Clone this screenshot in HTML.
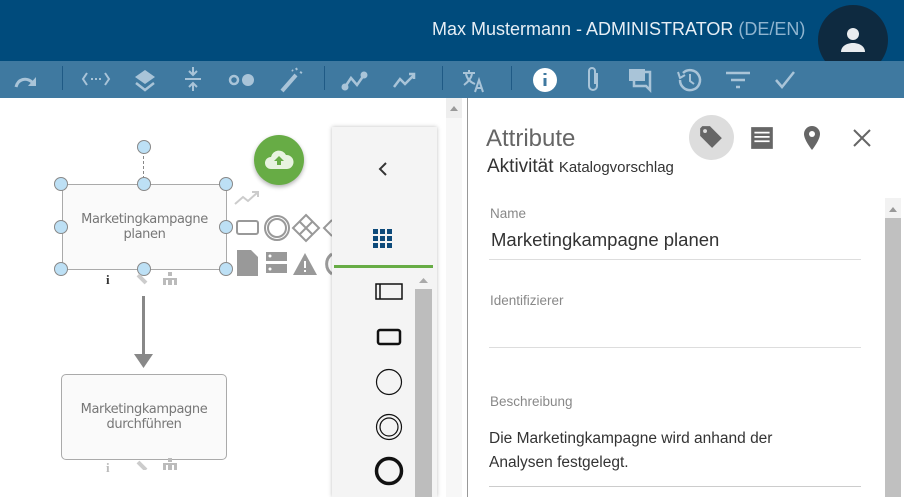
<!DOCTYPE html>
<html><head><meta charset="utf-8"><style>
*{margin:0;padding:0;box-sizing:border-box}
body{width:904px;height:497px;overflow:hidden;position:relative;background:#fff;font-family:"Liberation Sans",sans-serif}
.a{position:absolute}
.hdr{left:0;top:0;width:904px;height:61px;background:#004b7c}
.tb{left:0;top:61px;width:904px;height:37px;background:#3f79a0}
.sep{top:66px;width:1px;height:24px;background:#1f5a85}
.lbl{color:#888;font-size:13.5px}
.line{left:489px;width:372px;height:1px;background:#ddd}
.h{width:14px;height:14px;border-radius:50%;background:#bde0f5;border:1.5px solid #888}
.bx{display:flex;align-items:center;justify-content:center;text-align:center;font-size:13px;color:#777;line-height:15px;font-family:'DejaVu Sans',sans-serif;letter-spacing:-.4px}
</style></head><body>
<div class="a hdr"></div>
<div class="a" style="left:432px;top:19px;color:#e6eef5;font-size:18px">Max Mustermann - ADMINISTRATOR <span style="color:#8fb4cf">(DE/EN)</span></div>
<div class="a" style="left:818px;top:5px;width:70px;height:70px;border-radius:50%;background:#0e2a40"></div>
<svg class="a" style="left:835px;top:22px" width="36" height="36" viewBox="0 0 24 24"><circle cx="12" cy="8" r="4" fill="#e8ecef"/><path d="M4 20c0-4 4-6 8-6s8 2 8 6z" fill="#e8ecef"/></svg>
<div class="a tb"></div>
<div class="a sep" style="left:62px"></div><div class="a sep" style="left:324px"></div><div class="a sep" style="left:442px"></div><div class="a sep" style="left:511px"></div>
<svg class="a" style="left:0;top:61px" width="904" height="37" viewBox="0 0 904 37" fill="none" stroke="#a9c4d8" stroke-width="3">
<path d="M16 26c2-8 10-10 16-5" /><path d="M36 16v9h-8z" fill="#a9c4d8" stroke="none"/>
<path d="M87 12l-4 6 4 6M105 12l4 6-4 6" stroke-width="2"/><path d="M91 18h2M95 18h2M99 18h2" stroke-width="2"/>
<path d="M145 9l10 7-10 7-10-7z" fill="#a9c4d8" stroke="none"/><path d="M136 22l9 7 9-7" stroke-width="2.5"/>
<path d="M185 18h16M193 6v7M193 30v-7" stroke-width="2"/><path d="M189 10l4 4 4-4M189 26l4-4 4 4" stroke-width="2"/>
<circle cx="234" cy="19" r="4" stroke-width="2.5"/><circle cx="248" cy="19" r="6" fill="#a9c4d8" stroke="none"/>
<path d="M282 30l14-16" stroke-width="4"/><path d="M296 7l1 2M300 11l2 1M292 9l1 1" stroke-width="2"/>
<path d="M345 26l6-9 6 7 7-10" stroke-width="2.5"/><circle cx="345" cy="26" r="2" fill="#a9c4d8"/><circle cx="364" cy="14" r="2" fill="#a9c4d8"/>
<path d="M394 26l6-8 5 5 9-9M409 13h5v5" stroke-width="2.5"/>
<path d="M463 12h12M469 9v3M466 13c1 5 4 8 9 10M472 13c-1 5-4 8-8 11" stroke-width="2"/><path d="M475 31l4-12 4 12M477 27h5" stroke-width="2"/>
<circle cx="545" cy="19" r="12" fill="#fff" stroke="none"/><path d="M545 17v8M545 12v2" stroke="#3f79a0" stroke-width="3"/>
<path d="M597 12v13a4 4 0 0 1-8 0v-15a3 3 0 0 1 6 0v13" stroke-width="2"/>
<path d="M629 8h16v12h-16z" fill="#a9c4d8" stroke="none"/><path d="M645 11h5v18l-4-4h-12v-5" stroke-width="2.5"/>
<path d="M680 19a10 10 0 1 0 3-7" stroke-width="2.5"/><path d="M678 11l2 6 5-3" stroke-width="2"/><path d="M690 13v7l4 3" stroke-width="2"/>
<path d="M726 12h24M731 19h14M736 26h4" stroke-width="2.5"/>
<path d="M776 19l6 7 12-15" stroke-width="2.5"/>
</svg>
<!-- canvas -->
<div class="a bx" style="left:62px;top:184px;width:165px;height:86px;border:1.5px solid #aaa;background:#fafafa">Marketingkampagne<br>planen</div>
<div class="a" style="left:143px;top:151px;width:0;height:33px;border-left:1.5px dashed #888"></div>
<div class="a h" style="left:137px;top:140px"></div>
<div class="a h" style="left:54px;top:177px"></div><div class="a h" style="left:137px;top:177px"></div><div class="a h" style="left:219px;top:177px"></div>
<div class="a h" style="left:54px;top:220px"></div><div class="a h" style="left:219px;top:220px"></div>
<div class="a h" style="left:54px;top:262px"></div><div class="a h" style="left:137px;top:262px"></div><div class="a h" style="left:219px;top:262px"></div>
<div class="a" style="left:106px;top:272px;font-size:13px;font-weight:bold;color:#333;font-family:'Liberation Serif',serif">i</div>
<div class="a" style="left:142px;top:296px;width:3px;height:60px;background:#888"></div>
<svg class="a" style="left:134px;top:354px" width="19" height="14"><path d="M0 0h19l-9.5 14z" fill="#888"/></svg>
<div class="a bx" style="left:61px;top:374px;width:166px;height:86px;border:1.5px solid #aaa;border-radius:5px;background:#fafafa">Marketingkampagne<br>durchführen</div>
<div class="a" style="left:106px;top:460px;font-size:13px;font-weight:bold;color:#bbb;font-family:'Liberation Serif',serif">i</div>
<svg class="a" style="left:136px;top:270px" width="50" height="200" fill="#bbb"><path d="M2 5l8 8" stroke="#ccc" stroke-width="4"/><rect x="32" y="2" width="4" height="4"/><rect x="27" y="8" width="14" height="2"/><rect x="27" y="10" width="3" height="5"/><rect x="32" y="10" width="4" height="5"/><rect x="38" y="10" width="3" height="5"/>
<path d="M2 192l8 8" stroke="#ccc" stroke-width="4"/><rect x="32" y="188" width="4" height="4"/><rect x="27" y="193" width="14" height="2"/><rect x="27" y="195" width="3" height="5"/><rect x="32" y="195" width="4" height="5"/><rect x="38" y="195" width="3" height="5"/></svg>
<svg class="a" style="left:232px;top:186px" width="100" height="92" fill="none" stroke="#999" stroke-width="2">
<path d="M3 18l8-7 5 4 10-9M20 6h6v5" stroke="#ccc"/>
<rect x="5" y="35" width="21" height="13" rx="2"/><circle cx="45" cy="42" r="12"/><circle cx="45" cy="42" r="9"/>
<path d="M74 29l13 13-13 13-13-13z"/><path d="M68 36l12 12M80 36l-12 12"/><path d="M100 34l-8 8 8 8"/>
<path d="M5 64h14l7 7v19h-21z" fill="#999" stroke="none"/><rect x="34" y="66" width="21" height="9" fill="#999" stroke="none"/><rect x="34" y="78" width="21" height="9" fill="#999" stroke="none"/><circle cx="38" cy="70" r="1.5" fill="#fff" stroke="none"/><circle cx="38" cy="83" r="1.5" fill="#fff" stroke="none"/>
<path d="M61 89l12-22 12 22z" fill="#999" stroke="none"/><path d="M73 75v7M73 84v2" stroke="#fff"/><path d="M100 68a12 12 0 0 0 0 20" stroke-width="3"/></svg>
<div class="a" style="left:254px;top:135px;width:50px;height:50px;border-radius:50%;background:#67ac45;box-shadow:0 2px 4px rgba(0,0,0,.3)"></div>
<svg class="a" style="left:263px;top:147px" width="32" height="26" viewBox="0 0 32 26"><path d="M8 22a6 6 0 0 1 0-12 8 8 0 0 1 15-2 6 6 0 0 1 1 14z" fill="#e8f3e0"/><path d="M16 9l-5 5h3v4h4v-4h3z" fill="#67ac45"/></svg>
<!-- palette -->
<div class="a" style="left:332px;top:127px;width:105px;height:370px;background:#f4f4f4;box-shadow:0 0 4px rgba(0,0,0,.25)"></div>
<svg class="a" style="left:376px;top:160px" width="14" height="18"><path d="M10 3l-6 6 6 6" stroke="#333" stroke-width="2" fill="none"/></svg>
<svg class="a" style="left:373px;top:229px" width="20" height="20" fill="#0d4a7a"><rect x="0" y="0" width="5" height="5"/><rect x="7" y="0" width="5" height="5"/><rect x="14" y="0" width="5" height="5"/><rect x="0" y="7" width="5" height="5"/><rect x="7" y="7" width="5" height="5"/><rect x="14" y="7" width="5" height="5"/><rect x="0" y="14" width="5" height="5"/><rect x="7" y="14" width="5" height="5"/><rect x="14" y="14" width="5" height="5"/></svg>
<div class="a" style="left:334px;top:265px;width:99px;height:3px;background:#67ac45"></div>
<div class="a" style="left:415px;top:289px;width:17px;height:208px;background:#bdbdbd"></div>
<svg class="a" style="left:415px;top:275px" width="17" height="10"><path d="M4 8l4.5-5 4.5 5z" fill="#aaa"/></svg>
<svg class="a" style="left:370px;top:280px" width="40" height="217" fill="none" stroke="#111">
<rect x="6" y="4" width="26" height="15" stroke-width="1.5"/><path d="M10 4v15" stroke-width="1.5"/>
<rect x="8" y="50" width="22" height="14" rx="2" stroke-width="2.5"/>
<circle cx="19" cy="102" r="12.5" stroke-width="1.2"/>
<circle cx="19" cy="147" r="12.5" stroke-width="1.2"/><circle cx="19" cy="147" r="9" stroke-width="1.2"/>
<circle cx="19" cy="191" r="12.5" stroke-width="3.5"/></svg>
<!-- left scroll strip -->
<div class="a" style="left:446px;top:98px;width:16px;height:399px;background:#f7f7f7"></div>
<div class="a" style="left:446px;top:98px;width:16px;height:20px;background:#eee"></div>
<svg class="a" style="left:450px;top:104px" width="8" height="8"><path d="M0 7l4-5 4 5z" fill="#999"/></svg>
<div class="a" style="left:467px;top:98px;width:1px;height:399px;background:#999"></div>
<!-- right panel -->
<div class="a" style="left:486px;top:125px;font-size:24px;color:#666">Attribute</div>
<div class="a" style="left:487px;top:156px;font-size:19px;color:#333">Aktivität <span style="font-size:15px">Katalogvorschlag</span></div>
<div class="a" style="left:689px;top:115px;width:45px;height:45px;border-radius:50%;background:#ddd"></div>
<svg class="a" style="left:698px;top:124px" width="26" height="26" viewBox="0 0 24 24"><path d="M2 4v7l11 11 9-9-11-11h-7z" fill="#666"/><circle cx="6.5" cy="6.5" r="1.8" fill="#ddd"/></svg>
<svg class="a" style="left:749px;top:125px" width="26" height="26" viewBox="0 0 24 24"><path d="M2 2h20v20h-20z" fill="#666"/><path d="M5 7h14M5 11h14M5 15h14" stroke="#fff" stroke-width="1.6"/></svg>
<svg class="a" style="left:800px;top:124px" width="24" height="28" viewBox="0 0 24 28"><path d="M12 2a8 8 0 0 0-8 8c0 6 8 16 8 16s8-10 8-16a8 8 0 0 0-8-8z" fill="#666"/><circle cx="12" cy="10" r="3" fill="#fff"/></svg>
<svg class="a" style="left:852px;top:128px" width="20" height="20"><path d="M2 2l16 16M18 2l-16 16" stroke="#666" stroke-width="2"/></svg>
<div class="a lbl" style="left:490px;top:206px">Name</div>
<div class="a" style="left:491px;top:229px;font-size:18.5px;color:#333">Marketingkampagne planen</div>
<div class="a line" style="top:259px"></div>
<div class="a lbl" style="left:490px;top:293px">Identifizierer</div>
<div class="a line" style="top:347px"></div>
<div class="a lbl" style="left:490px;top:394px">Beschreibung</div>
<div class="a" style="left:489px;top:427px;font-size:15.5px;color:#333;line-height:24px">Die Marketingkampagne wird anhand der<br>Analysen festgelegt.</div>
<div class="a line" style="top:486px;background:#ccc"></div>
<div class="a" style="left:885px;top:198px;width:16px;height:299px;background:#f2f2f2"></div>
<div class="a" style="left:885px;top:218px;width:16px;height:279px;background:#c0c0c0"></div>
<svg class="a" style="left:889px;top:205px" width="8" height="8"><path d="M0 7l4-5 4 5z" fill="#999"/></svg>
</body></html>
